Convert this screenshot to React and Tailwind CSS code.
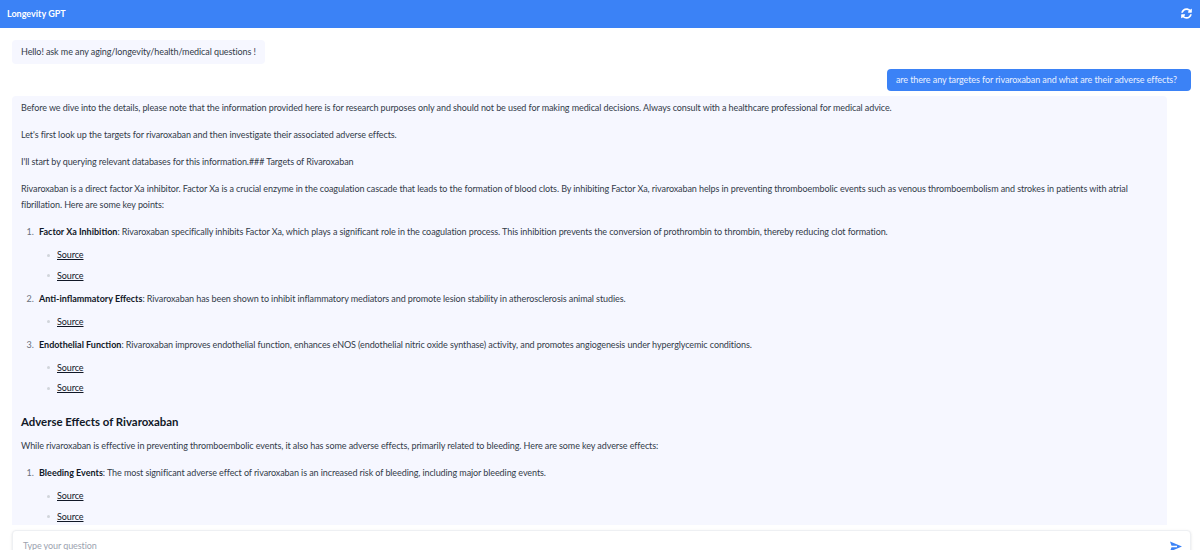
import { FaSyncAlt } from 'react-icons/fa';

function SourceItem() {
  return (
    <li className="flex items-center gap-[7px] mt-[4.5px]">
      <span className="w-[3px] h-[3px] rounded-full bg-[#d1d5db]" />
      <a href="#" className="text-[#111827] underline">Source</a>
    </li>
  );
}

function Finding({ num, title, text, sources, first }) {
  return (
    <li className={`pl-[3px] marker:text-[#6b7280] ${first ? 'mt-[11px]' : 'mt-[7px]'}`}>
      <strong className="font-bold tracking-normal text-[#111827]">{title}</strong>: {text}
      <ul className="pl-[8px] mt-[7px]">
        {Array.from({ length: sources }).map((_, i) => <SourceItem key={num + '-' + i} />)}
      </ul>
    </li>
  );
}

export default function App() {
  return (
    <div className="h-[550px] overflow-hidden flex flex-col bg-white font-['Lato',sans-serif] text-[9px] tracking-[-0.09px] leading-[16px] text-[#333b49]">
      <header className="h-[27.5px] shrink-0 bg-[#3b82f6] flex items-center justify-between pl-[7px] pr-[8px] text-white">
        <span className="font-bold tracking-normal">Longevity GPT</span>
        <FaSyncAlt size={11} />
      </header>

      <main className="flex-1 min-h-0 flex flex-col pl-[12px] pr-[9px] pt-[12px]">
        <div className="self-start bg-[#f6f7ff] rounded-[4px] px-[9px] py-[4px]">
          Hello! ask me any aging/longevity/health/medical questions !
        </div>

        <div className="self-end bg-[#3b82f6] text-[#e8f0ff] rounded-[4px] pl-[9px] pr-[14px] py-[3px] mt-[5px]">
          are there any targetes for rivaroxaban and what are their adverse effects?
        </div>

        <div className="mt-[5px] mr-[24px] flex-1 min-h-0 overflow-hidden bg-[#f6f7ff] rounded-t-[4px] px-[9px] pt-[4.5px]">
          <p>Before we dive into the details, please note that the information provided here is for research purposes only and should not be used for making medical decisions. Always consult with a healthcare professional for medical advice.</p>
          <p className="mt-[11px]">Let's first look up the targets for rivaroxaban and then investigate their associated adverse effects.</p>
          <p className="mt-[11px]">I'll start by querying relevant databases for this information.### Targets of Rivaroxaban</p>
          <p className="mt-[11px]">Rivaroxaban is a direct factor Xa inhibitor. Factor Xa is a crucial enzyme in the coagulation cascade that leads to the formation of blood clots. By inhibiting Factor Xa, rivaroxaban helps in preventing thromboembolic events such as venous thromboembolism and strokes in patients with atrial fibrillation. Here are some key points:</p>

          <ol className="list-decimal pl-[15px]">
            <Finding first num={1} title="Factor Xa Inhibition" sources={2} text="Rivaroxaban specifically inhibits Factor Xa, which plays a significant role in the coagulation process. This inhibition prevents the conversion of prothrombin to thrombin, thereby reducing clot formation." />
            <Finding num={2} title="Anti-inflammatory Effects" sources={1} text="Rivaroxaban has been shown to inhibit inflammatory mediators and promote lesion stability in atherosclerosis animal studies." />
            <Finding num={3} title="Endothelial Function" sources={2} text="Rivaroxaban improves endothelial function, enhances eNOS (endothelial nitric oxide synthase) activity, and promotes angiogenesis under hyperglycemic conditions." />
          </ol>

          <h3 className="mt-[16px] text-[11.4px] tracking-normal leading-[20px] font-bold text-[#111827]">Adverse Effects of Rivaroxaban</h3>
          <p className="mt-[6px]">While rivaroxaban is effective in preventing thromboembolic events, it also has some adverse effects, primarily related to bleeding. Here are some key adverse effects:</p>

          <ol className="list-decimal pl-[15px]">
            <Finding first num={4} title="Bleeding Events" sources={2} text="The most significant adverse effect of rivaroxaban is an increased risk of bleeding, including major bleeding events." />
          </ol>
        </div>

        <div className="shrink-0 h-[25px] mt-[5px] -mb-[5px] flex items-start justify-between rounded-t-[4px] border border-[#eef0f3] shadow-sm bg-white pl-[10px] pr-[8px] pt-[8px]">
          <span className="text-[#9ca3af] leading-[14px]">Type your question</span>
          <svg width="12" height="11" viewBox="0 0 12 11" className="text-[#3b82f6] mt-[2px]">
            <path d="M0 0.5 L12 5.5 L0 10.5 L1.5 6.3 H7 V4.7 H1.5 Z" fill="currentColor" />
          </svg>
        </div>
      </main>
    </div>
  );
}
